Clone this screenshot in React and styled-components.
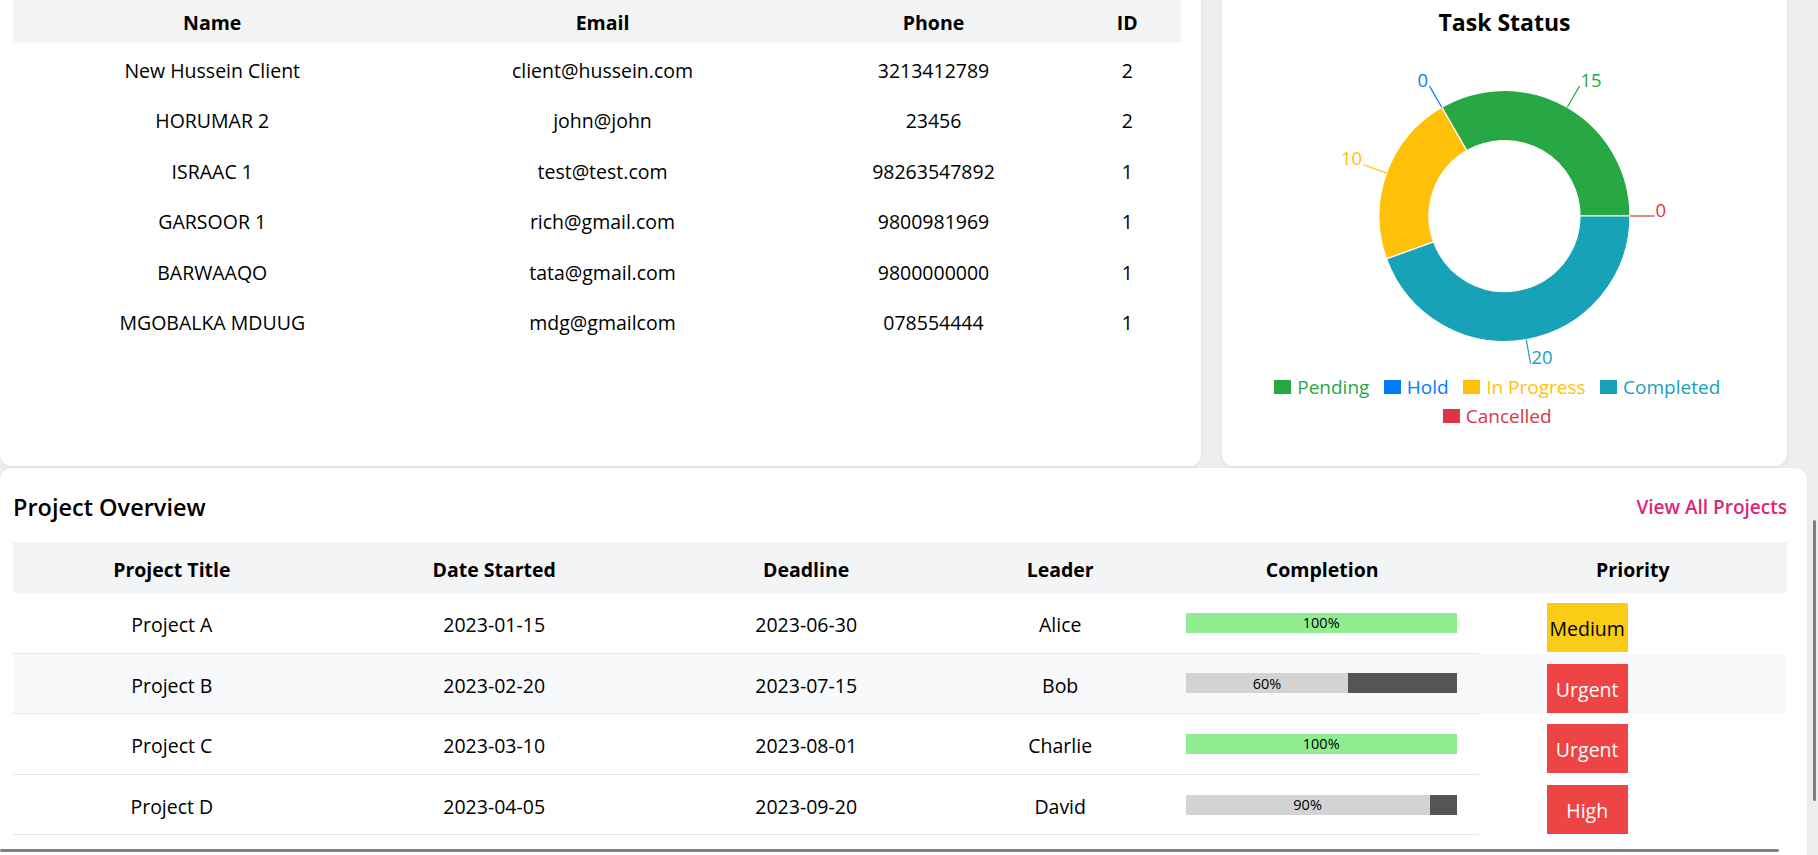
import React from "react";
import styled, { createGlobalStyle } from "styled-components";

const clients = [
  { name: "New Hussein Client", email: "client@hussein.com", phone: "3213412789", id: 2 },
  { name: "HORUMAR 2", email: "john@john", phone: "23456", id: 2 },
  { name: "ISRAAC 1", email: "test@test.com", phone: "98263547892", id: 1 },
  { name: "GARSOOR 1", email: "rich@gmail.com", phone: "9800981969", id: 1 },
  { name: "BARWAAQO", email: "tata@gmail.com", phone: "9800000000", id: 1 },
  { name: "MGOBALKA MDUUG", email: "mdg@gmailcom", phone: "078554444", id: 1 },
];

const projects = [
  { title: "Project A", started: "2023-01-15", deadline: "2023-06-30", leader: "Alice", completion: 100, priority: "Medium" },
  { title: "Project B", started: "2023-02-20", deadline: "2023-07-15", leader: "Bob", completion: 60, priority: "Urgent" },
  { title: "Project C", started: "2023-03-10", deadline: "2023-08-01", leader: "Charlie", completion: 100, priority: "Urgent" },
  { title: "Project D", started: "2023-04-05", deadline: "2023-09-20", leader: "David", completion: 90, priority: "High" },
];

const taskStatus = [
  { name: "Pending", value: 15, color: "#28a745" },
  { name: "Hold", value: 0, color: "#007bff" },
  { name: "In Progress", value: 10, color: "#ffc107" },
  { name: "Completed", value: 20, color: "#17a2b8" },
  { name: "Cancelled", value: 0, color: "#dc3545" },
];

const GlobalStyle = createGlobalStyle`
  * { box-sizing: border-box; }
  html, body {
    margin: 0;
    padding: 0;
    overflow: hidden;
    background: #edeef0;
  }
  body {
    font-family: "Open Sans", "Noto Sans", sans-serif;
    color: #000;
  }
`;

const Main = styled.main`
  width: 1807px;
  margin-top: -16px;
  display: flex;
  flex-direction: column;
  gap: 2px;
`;

const TopRow = styled.div`
  display: grid;
  grid-template-columns: 1201px 565px;
  column-gap: 21px;
  height: 482px;
`;

const Card = styled.section`
  background: #fff;
  border-radius: 12px;
  box-shadow: 0 1px 4px rgba(0, 0, 0, 0.06);
`;

const ClientCard = styled(Card)`
  padding: 16px 20px 0 13px;
`;

const StatusCard = styled(Card)`
  padding-top: 23px;
  display: flex;
  flex-direction: column;
  align-items: center;
`;

const ProjectCard = styled(Card)`
  padding: 24px 20px 24px 13px;
  min-height: 420px;
`;

const DataTable = styled.table`
  width: 100%;
  border-collapse: separate;
  border-spacing: 0;
  table-layout: fixed;
  font-size: 19.5px;

  th {
    background: #f3f4f6;
    font-weight: 700;
    text-align: center;
    padding: 1px 6px 0;
    white-space: nowrap;
  }
  td {
    text-align: center;
    padding: 4px 6px 0;
    white-space: nowrap;
  }
`;

const ClientTable = styled(DataTable)`
  th { height: 43px; }
  td { height: 50.5px; }
`;

const ProjectTable = styled(DataTable)`
  th { height: 51px; padding-top: 3px; }
  td {
    height: 60.6px;
    border-bottom: 1px solid #e5e7eb;
  }
`;

const ProjectRow = styled.tr`
  background: ${(p) => (p.$highlight ? "#f8f9fa" : "transparent")};
`;

const PriorityCell = styled.td`
  && {
    border-bottom: none;
    padding: 10px 0 0;
    vertical-align: top;
  }
`;

const CardTitle = styled.h2`
  margin: 0;
  font-size: 23px;
  line-height: 30px;
  font-weight: 700;
`;

const Legend = styled.ul`
  list-style: none;
  margin: 0;
  padding: 0;
  width: 480px;
  display: flex;
  flex-wrap: wrap;
  justify-content: center;
  row-gap: 1px;
`;

const LegendItem = styled.li`
  display: flex;
  align-items: center;
  margin-right: 14.5px;
  height: 28px;
  font-size: 19px;
  color: ${(p) => p.$color};
`;

const LegendSwatch = styled.span`
  width: 17px;
  height: 14px;
  margin-right: 6px;
  background: ${(p) => p.$color};
`;

const TitleRow = styled.div`
  display: flex;
  justify-content: space-between;
  align-items: center;
  height: 30px;
  margin-bottom: 20px;
`;

const SectionTitle = styled.h2`
  margin: 0;
  font-size: 23.5px;
  font-weight: 600;
`;

const ViewAll = styled.a`
  color: #db2777;
  font-size: 19px;
  font-weight: 600;
  text-decoration: none;
  cursor: pointer;
`;

const Track = styled.div`
  display: flex;
  width: 100%;
  height: 20px;
  background: #555;
`;

const Fill = styled.div`
  height: 100%;
  display: flex;
  align-items: center;
  justify-content: center;
  font-size: 14.5px;
  background: ${(p) => (p.$done ? "#90ee90" : "#d3d3d3")};
`;

const ProgressCell = styled.td`
  && { padding: 0 22px 0 20px; }
`;

const Badge = styled.span`
  display: flex;
  align-items: center;
  justify-content: center;
  width: 81px;
  height: 49px;
  margin-left: 68px;
  padding-top: 2px;
  font-size: 19.5px;
  background: ${(p) => (p.$level === "Medium" ? "#facc15" : "#ef4444")};
  color: ${(p) => (p.$level === "Medium" ? "#000" : "#fff")};
`;

const ScrollThumb = styled.div`
  position: fixed;
  background: #808080;
  border-radius: 2px;
  ${(p) =>
    p.$vertical
      ? "right: 2px; top: 520px; width: 3px; height: 281px;"
      : "left: 0; top: 849px; width: 1779px; height: 3px;"}
`;

const CX = 282.5;
const CY = 179;
const OUTER = 125.5;
const INNER = 75.5;

const polar = (r, deg) => [
  CX + r * Math.cos((deg * Math.PI) / 180),
  CY - r * Math.sin((deg * Math.PI) / 180),
];

const arcPath = (a0, a1) => {
  const [x0, y0] = polar(OUTER, a0);
  const [x1, y1] = polar(OUTER, a1);
  const [x2, y2] = polar(INNER, a1);
  const [x3, y3] = polar(INNER, a0);
  const large = a1 - a0 > 180 ? 1 : 0;
  return `M${x0},${y0} A${OUTER},${OUTER} 0 ${large} 0 ${x1},${y1} L${x2},${y2} A${INNER},${INNER} 0 ${large} 1 ${x3},${y3} Z`;
};

const DonutChart = ({ data }) => {
  const total = data.reduce((s, d) => s + d.value, 0);
  let angle = 0;
  const slices = data.map((d) => {
    const start = angle;
    const end = angle + (d.value / total) * 360;
    angle = end;
    return { ...d, start, end, mid: (start + end) / 2 };
  });

  return (
    <svg width="565" height="336" viewBox="0 0 565 336">
      {slices
        .filter((s) => s.value > 0)
        .map((s) => (
          <path key={s.name} d={arcPath(s.start, s.end)} fill={s.color} stroke="#fff" strokeWidth="1.2" />
        ))}
      {slices.map((s) => {
        const [x1, y1] = polar(OUTER, s.mid);
        const [x2, y2] = polar(OUTER + 24.5, s.mid);
        const right = Math.cos((s.mid * Math.PI) / 180) >= -0.01;
        return (
          <g key={s.name}>
            <line x1={x1} y1={y1} x2={x2} y2={y2} stroke={s.color} strokeWidth="1.2" />
            <text
              x={x2 + (right ? 1 : -1.5)}
              y={y2 + 0.5}
              fill={s.color}
              fontSize="18.5"
              textAnchor={right ? "start" : "end"}
            >
              {s.value}
            </text>
          </g>
        );
      })}
    </svg>
  );
};

const Progress = ({ value }) => (
  <Track>
    <Fill $done={value === 100} style={{ width: `${value}%` }}>
      {value}%
    </Fill>
  </Track>
);

export default function App() {
  return (
    <>
      <GlobalStyle />
      <Main>
        <TopRow>
          <ClientCard>
            <ClientTable>
              <colgroup>
                <col style={{ width: "398.5px" }} />
                <col style={{ width: "382px" }} />
                <col style={{ width: "280px" }} />
                <col style={{ width: "107.5px" }} />
              </colgroup>
              <thead>
                <tr>
                  <th>Name</th>
                  <th>Email</th>
                  <th>Phone</th>
                  <th>ID</th>
                </tr>
              </thead>
              <tbody>
                {clients.map((c) => (
                  <tr key={c.name}>
                    <td>{c.name}</td>
                    <td>{c.email}</td>
                    <td>{c.phone}</td>
                    <td>{c.id}</td>
                  </tr>
                ))}
              </tbody>
            </ClientTable>
          </ClientCard>

          <StatusCard>
            <CardTitle>Task Status</CardTitle>
            <DonutChart data={taskStatus} />
            <Legend>
              {taskStatus.map((s) => (
                <LegendItem key={s.name} $color={s.color}>
                  <LegendSwatch $color={s.color} />
                  {s.name}
                </LegendItem>
              ))}
            </Legend>
          </StatusCard>
        </TopRow>

        <ProjectCard>
          <TitleRow>
            <SectionTitle>Project Overview</SectionTitle>
            <ViewAll>View All Projects</ViewAll>
          </TitleRow>
          <ProjectTable>
            <colgroup>
              <col style={{ width: "317.7px" }} />
              <col style={{ width: "327px" }} />
              <col style={{ width: "297px" }} />
              <col style={{ width: "211px" }} />
              <col style={{ width: "313px" }} />
              <col style={{ width: "308.3px" }} />
            </colgroup>
            <thead>
              <tr>
                <th>Project Title</th>
                <th>Date Started</th>
                <th>Deadline</th>
                <th>Leader</th>
                <th>Completion</th>
                <th>Priority</th>
              </tr>
            </thead>
            <tbody>
              {projects.map((p, i) => (
                <ProjectRow key={p.title} $highlight={i === 1}>
                  <td>{p.title}</td>
                  <td>{p.started}</td>
                  <td>{p.deadline}</td>
                  <td>{p.leader}</td>
                  <ProgressCell>
                    <Progress value={p.completion} />
                  </ProgressCell>
                  <PriorityCell>
                    <Badge $level={p.priority}>{p.priority}</Badge>
                  </PriorityCell>
                </ProjectRow>
              ))}
            </tbody>
          </ProjectTable>
        </ProjectCard>
      </Main>
      <ScrollThumb $vertical />
      <ScrollThumb />
    </>
  );
}
